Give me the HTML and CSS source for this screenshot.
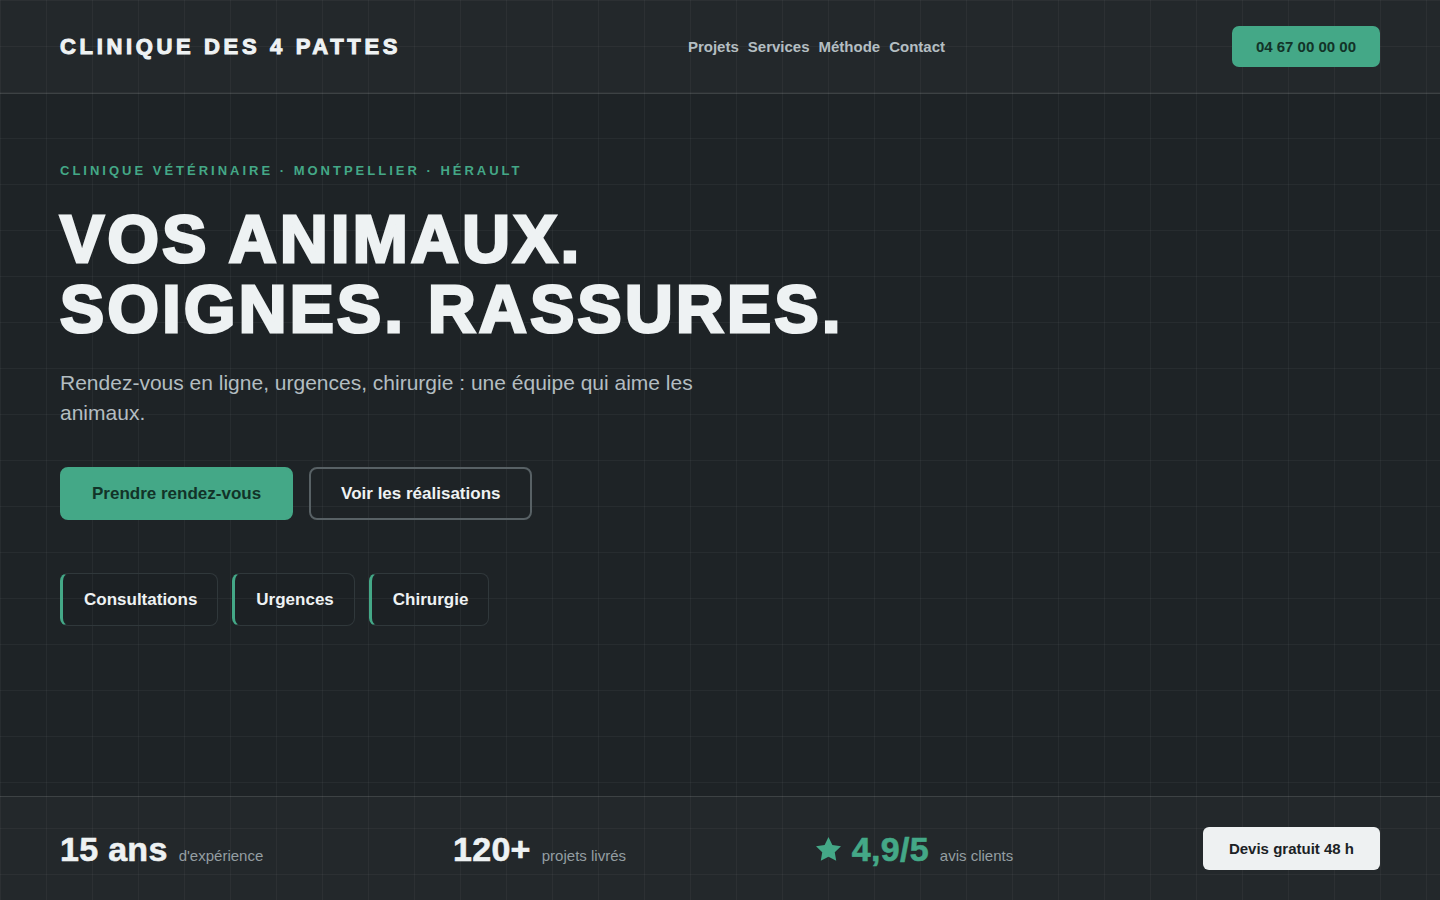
FILE: index.html
```html
<!DOCTYPE html>
<html lang="fr">
<head>
<meta charset="utf-8">
<title>Clinique des 4 Pattes</title>
<link rel="stylesheet" href="styles.css">
</head>
<body>
<header class="site-header">
  <a class="logo" href="#">CLINIQUE DES 4 PATTES</a>
  <nav class="nav">
    <a href="#">Projets</a>
    <a href="#">Services</a>
    <a href="#">Méthode</a>
    <a href="#">Contact</a>
  </nav>
  <a class="btn-phone" href="#">04 67 00 00 00</a>
</header>

<main class="hero">
  <p class="eyebrow">CLINIQUE VÉTÉRINAIRE · MONTPELLIER · HÉRAULT</p>
  <h1 class="headline">VOS ANIMAUX.<br>SOIGNES. RASSURES.</h1>
  <p class="lead">Rendez-vous en ligne, urgences, chirurgie : une équipe qui aime les animaux.</p>
  <div class="actions">
    <a class="btn btn-primary" href="#">Prendre rendez-vous</a>
    <a class="btn btn-ghost" href="#">Voir les réalisations</a>
  </div>
  <ul class="chips">
    <li class="chip">Consultations</li>
    <li class="chip">Urgences</li>
    <li class="chip">Chirurgie</li>
  </ul>
</main>

<section class="stats">
  <div class="stat"><span class="stat-num">15 ans</span><span class="stat-label">d'expérience</span></div>
  <div class="stat"><span class="stat-num">120+</span><span class="stat-label">projets livrés</span></div>
  <div class="stat">
    <span class="stat-num stat-green"><svg class="star" viewBox="2 2 20 19.1" width="25" height="24" aria-hidden="true"><polygon points="12 2 15.09 8.26 22 9.27 17 14.14 18.18 21.02 12 17.77 5.82 21.02 7 14.14 2 9.27 8.91 8.26" fill="currentColor"/></svg>4,9/5</span>
    <span class="stat-label">avis clients</span>
  </div>
  <a class="btn-quote" href="#">Devis gratuit 48 h</a>
</section>
</body>
</html>
```

FILE: styles.css
```css
* { box-sizing: border-box; }

html, body { height: 100%; }

body {
  margin: 0;
  min-height: 100vh;
  display: flex;
  flex-direction: column;
  font-family: "Liberation Sans", Arial, sans-serif;
  color: #eef2f3;
  background-color: #1e2326;
  background-image:
    linear-gradient(to right, rgba(255,255,255,0.04) 1px, transparent 1px),
    linear-gradient(to bottom, rgba(255,255,255,0.04) 1px, transparent 1px);
  background-size: 46px 46px;
}

a { text-decoration: none; color: inherit; }

/* Header */
.site-header {
  display: flex;
  align-items: center;
  justify-content: space-between;
  padding: 26px 60px;
  background: rgba(255,255,255,0.025);
  border-bottom: 1px solid rgba(255,255,255,0.12);
}

.logo {
  font-size: 22px;
  font-weight: 700;
  letter-spacing: 3.65px;
  line-height: 26px;
  color: #eef2f3;
  -webkit-text-stroke: 1px #eef2f3;
}

.nav {
  display: flex;
  gap: 9px;
}

.nav a {
  font-size: 15px;
  font-weight: 700;
  color: #b4bec2;
}

.btn-phone {
  display: block;
  padding: 12px 24px;
  font-size: 15px;
  line-height: 17px;
  font-weight: 700;
  color: #123328;
  background: #44a887;
  border-radius: 7px;
}

/* Hero */
.hero {
  flex: 1;
  padding: 69px 60px 0;
}

.eyebrow {
  margin: 0;
  font-size: 13px;
  line-height: 16px;
  font-weight: 700;
  letter-spacing: 3px;
  color: #44a887;
}

.headline {
  margin: 25px 0 0;
  font-size: 66px;
  line-height: 70px;
  font-weight: 700;
  letter-spacing: 3.4px;
  color: #eef2f3;
  -webkit-text-stroke: 3px #eef2f3;
}

.lead {
  margin: 24px 0 0;
  max-width: 680px;
  font-size: 21px;
  line-height: 30px;
  color: #b3bdc1;
}

.actions {
  display: flex;
  gap: 16px;
  margin-top: 39px;
}

.btn {
  display: block;
  padding: 15px 30px;
  font-size: 17px;
  line-height: 19px;
  font-weight: 700;
  border: 2px solid transparent;
  border-radius: 8px;
}

.btn-primary {
  background: #44a887;
  border-color: #44a887;
  color: #123328;
}

.btn-ghost {
  border-color: #586165;
  color: #eef2f3;
}

.chips {
  display: flex;
  gap: 14px;
  margin: 53px 0 0;
  padding: 0;
  list-style: none;
}

.chip {
  padding: 16px 20px 16px 21px;
  font-size: 17px;
  line-height: 19px;
  font-weight: 700;
  color: #eef2f3;
  background: rgba(0,0,0,0.04);
  border: 1px solid #30383b;
  border-left: 3px solid #44a887;
  border-radius: 8px;
}

/* Stats */
.stats {
  display: flex;
  align-items: center;
  justify-content: space-between;
  padding: 30px 60px;
  background: rgba(255,255,255,0.025);
  border-top: 1px solid rgba(255,255,255,0.12);
}

.stat {
  display: flex;
  align-items: baseline;
  gap: 11px;
}

.stat-num {
  display: inline-flex;
  align-items: baseline;
  gap: 11px;
  font-size: 34px;
  line-height: 40px;
  font-weight: 700;
  letter-spacing: 0.3px;
  color: #eef2f3;
  -webkit-text-stroke: 0.6px currentColor;
}

.stat-green { color: #44a887; }

.star { display: block; align-self: center; }

.stat-label {
  font-size: 15px;
  color: #949ea2;
}

.btn-quote {
  display: block;
  padding: 13px 26px;
  font-size: 15px;
  line-height: 17px;
  font-weight: 700;
  color: #1b2225;
  background: #eef1f2;
  border-radius: 6px;
}
```
